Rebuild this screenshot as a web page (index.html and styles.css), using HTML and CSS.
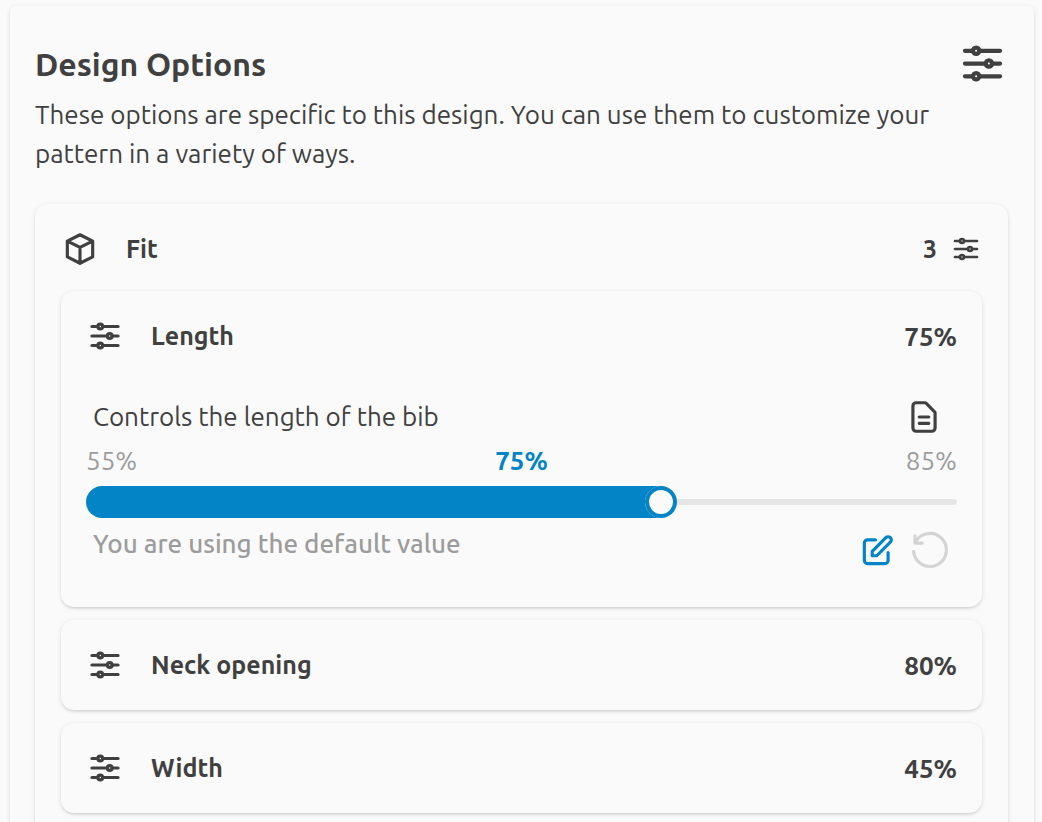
FILE: index.html
```html
<!DOCTYPE html>
<html lang="en">
<head>
<meta charset="utf-8">
<meta name="viewport" content="width=device-width, initial-scale=1">
<title>Design Options</title>
<link rel="stylesheet" href="styles.css">
</head>
<body>
<svg class="sprite" aria-hidden="true">
  <symbol id="options" viewBox="0 0 24 24">
    <path d="M10.5 6h9.75M3.75 6H7.5m3 12h9.75M3.75 18H7.5m9-6h3.75M3.75 12h9.75"/>
    <circle cx="9" cy="6" r="1.5"/><circle cx="15" cy="12" r="1.5"/><circle cx="9" cy="18" r="1.5"/>
  </symbol>
</svg>
<main class="panel">
  <header class="intro">
    <div class="intro-head">
      <h1 class="title">Design Options</h1>
      <svg class="icon icon-lg" aria-hidden="true"><use href="#options"/></svg>
    </div>
    <p class="lead">These options are specific to this design. You can use them to customize your pattern in a variety of ways.</p>
  </header>

  <section class="group">
    <button class="row group-row" type="button" aria-expanded="true">
      <svg class="icon" viewBox="0 0 24 24" aria-hidden="true"><path d="M20 7l-8-4-8 4m16 0l-8 4m8-4v10l-8 4m0-10L4 7m8 4v10M4 7v10l8 4"/></svg>
      <span class="name">Fit</span>
      <span class="count">3</span>
      <svg class="icon icon-sm" aria-hidden="true"><use href="#options"/></svg>
    </button>

    <section class="card">
      <button class="row" type="button" aria-expanded="true">
        <svg class="icon" aria-hidden="true"><use href="#options"/></svg>
        <span class="name">Length</span>
        <span class="value">75%</span>
      </button>
      <div class="detail">
        <div class="about">
          <label for="length">Controls the length of the bib</label>
          <button class="tool" type="button" aria-label="Documentation">
            <svg class="icon" viewBox="0 0 24 24" aria-hidden="true"><path d="M9 12h6m-6 4h6m2 5H7a2 2 0 01-2-2V5a2 2 0 012-2h5.586a1 1 0 01.707.293l5.414 5.414a1 1 0 01.293.707V19a2 2 0 01-2 2z"/></svg>
          </button>
        </div>
        <div class="scale">
          <span>55%</span>
          <span class="current">75%</span>
          <span>85%</span>
        </div>
        <input class="range" id="length" type="range" min="55" max="85" value="75">
        <div class="status">
          <span class="note">You are using the default value</span>
          <div class="tools">
            <button class="tool tool-edit" type="button" aria-label="Edit value">
              <svg class="icon" viewBox="0 0 24 24" aria-hidden="true"><path d="M11 5H6a2 2 0 00-2 2v11a2 2 0 002 2h11a2 2 0 002-2v-5m-1.414-9.414a2 2 0 112.828 2.828L11.828 15H9v-2.828l8.586-8.586z"/></svg>
            </button>
            <button class="tool tool-reset" type="button" aria-label="Reset to default" disabled>
              <svg class="icon" viewBox="0 0 24 24" aria-hidden="true"><path d="M2.5 2.4V7H7.1M1.6 12.3A10.4 10.4 0 1 0 2.5 7"/></svg>
            </button>
          </div>
        </div>
      </div>
    </section>

    <section class="card">
      <button class="row" type="button" aria-expanded="false">
        <svg class="icon" aria-hidden="true"><use href="#options"/></svg>
        <span class="name">Neck opening</span>
        <span class="value">80%</span>
      </button>
    </section>

    <section class="card">
      <button class="row" type="button" aria-expanded="false">
        <svg class="icon" aria-hidden="true"><use href="#options"/></svg>
        <span class="name">Width</span>
        <span class="value">45%</span>
      </button>
    </section>
  </section>
</main>
</body>
</html>
```
FILE: styles.css
```css
:root {
  --surface: #fafafa;
  --ink: #404040;
  --muted: #9c9c9c;
  --faint: #d4d4d4;
  --accent: #0284c7;
  --shadow: 0 1px 5px rgba(0, 0, 0, .1), 0 2px 3px -1px rgba(0, 0, 0, .12);
}

* { box-sizing: border-box; }

body {
  margin: 0;
  padding: 6px 8px 0 10px;
  background: var(--surface);
  color: var(--ink);
  font: 26px/39px Ubuntu, "Noto Sans", sans-serif;
}

h1, p { margin: 0; }

button {
  margin: 0;
  padding: 0;
  border: 0;
  background: none;
  color: inherit;
  font: inherit;
}

.sprite { display: none; }

.icon {
  flex: none;
  display: block;
  width: 38px;
  height: 38px;
  fill: none;
  stroke: currentColor;
  stroke-width: 2;
  stroke-linecap: round;
  stroke-linejoin: round;
}
.icon-lg { width: 51px; height: 51px; }
.icon-sm { width: 32px; height: 32px; }

.panel {
  padding: 31px 26px 26px 25px;
  border-radius: 6px;
  background: var(--surface);
  box-shadow: var(--shadow);
}

.intro-head {
  display: flex;
  align-items: center;
  justify-content: space-between;
  height: 52px;
  margin-bottom: 6px;
}

.title {
  padding-top: 2px;
  font-size: 32px;
  font-weight: 600;
  line-height: 40px;
}

.group {
  display: flex;
  flex-direction: column;
  gap: 13px;
  margin-top: 31px;
  padding: 0 26px 26px;
  border-radius: 13px;
  background: var(--surface);
  box-shadow: var(--shadow);
}

.card {
  border-radius: 13px;
  background: var(--surface);
  box-shadow: var(--shadow);
}

.row {
  display: flex;
  align-items: center;
  width: 100%;
  height: 90px;
  padding: 0 25px;
  text-align: left;
}

.group-row {
  margin-bottom: -16px;
  padding: 0;
}

.name {
  flex: 1;
  margin-left: 27px;
  font-size: 25px;
  font-weight: 600;
}

.count {
  margin-right: 13px;
  font-size: 25px;
  font-weight: 600;
}

.value, .current { font-weight: 700; }

.detail { padding: 16px 25px 38px; }

.about, .status {
  display: flex;
  justify-content: space-between;
  padding: 0 14px 0 7px;
}

.scale {
  display: flex;
  justify-content: space-between;
  margin-top: 5px;
  color: var(--muted);
}
.current { color: var(--accent); }

.range {
  -webkit-appearance: none;
  appearance: none;
  display: block;
  width: 100%;
  height: 32px;
  margin: 6px 0 0;
  border-radius: 16px;
  background: transparent;
  overflow: hidden;
}
.range::-webkit-slider-runnable-track {
  height: 6px;
  border-radius: 3px;
  background: #e6e6e6;
}
.range::-webkit-slider-thumb {
  -webkit-appearance: none;
  width: 32px;
  height: 32px;
  margin-top: -13px;
  border-radius: 16px;
  background: var(--surface);
  box-shadow: inset 0 0 0 4px var(--accent), -1616px 0 0 1600px var(--accent);
}

.note {
  margin-top: 6px;
  color: var(--muted);
  font-weight: 500;
}

.tools {
  display: flex;
  gap: 15px;
  margin-top: 14px;
}
.status { height: 51px; padding-right: 8px; }
.tool-edit { color: var(--accent); }
.tool-reset { color: var(--faint); }
.tool-reset .icon { stroke-width: 2; overflow: visible; }
```
